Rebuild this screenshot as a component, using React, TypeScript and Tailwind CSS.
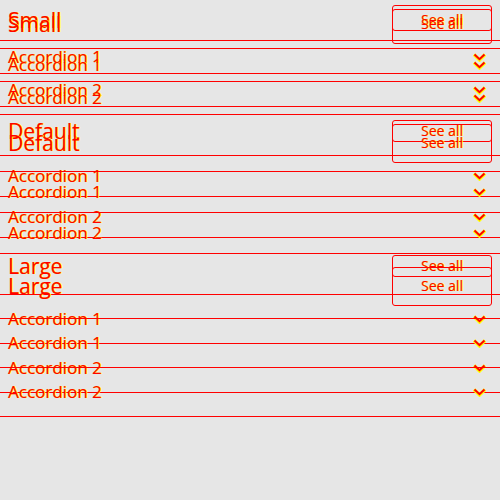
import React from "react";

type Variant = "a" | "b";

interface Section {
  title: string;
  headerA: string;
  headerB: string;
  itemPad: string;
}

const sections: Section[] = [
  { title: "Small", headerA: "h-[41px]", headerB: "h-[49px]", itemPad: "py-1" },
  { title: "Default", headerA: "h-[49px]", headerB: "h-[57px]", itemPad: "py-2" },
  { title: "Large", headerA: "h-[57px]", headerB: "h-[65px]", itemPad: "py-3" },
];

const items = ["Accordion 1", "Accordion 2"];

// red glyph with a yellow fringe on its right edge, like the diff render
const diffText = "text-[#ff0000] [text-shadow:1px_0_0_#ffff00]";

const Chevron = () => (
  <svg width="13" height="9" viewBox="0 0 13 9" className="mr-[14px]">
    <polyline points="1,1.5 6.5,7 12,1.5" fill="none" stroke="#ffff00" strokeWidth="3.4" />
    <polyline points="1.5,1.5 6.5,6.2 11.5,1.5" fill="none" stroke="#ff0000" strokeWidth="2" />
  </svg>
);

const Layer: React.FC<{ variant: Variant }> = ({ variant }) => {
  const buttonH = variant === "a" ? "h-[22px]" : "h-[39px]";

  return (
    <div className="col-start-1 row-start-1 flex flex-col">
      {sections.map((s) => (
        <div key={s.title} className="flex flex-col">
          <div
            className={`flex items-center justify-between px-2 border-b border-[#ff0000] ${
              variant === "a" ? s.headerA : s.headerB
            }`}>
            <span className={`text-[21px] leading-7 ${diffText}`}>{s.title}</span>
            <div
              className={`flex items-center justify-center w-[100px] rounded-[3px] border border-[#ff0000] text-sm ${buttonH} ${diffText}`}>
              See all
            </div>
          </div>
          {items.map((label) => (
            <div
              key={label}
              className={`flex items-center justify-between pl-2 border-b border-[#ff0000] ${s.itemPad}`}>
              <span className={`text-[17px] leading-6 ${diffText}`}>{label}</span>
              <Chevron />
            </div>
          ))}
        </div>
      ))}
    </div>
  );
};

export default function App() {
  return (
    <div className="w-[500px] h-[500px] overflow-hidden bg-[#e6e6e6] font-['Open_Sans',sans-serif]">
      <div className="grid">
        <Layer variant="a" />
        <Layer variant="b" />
      </div>
    </div>
  );
}
